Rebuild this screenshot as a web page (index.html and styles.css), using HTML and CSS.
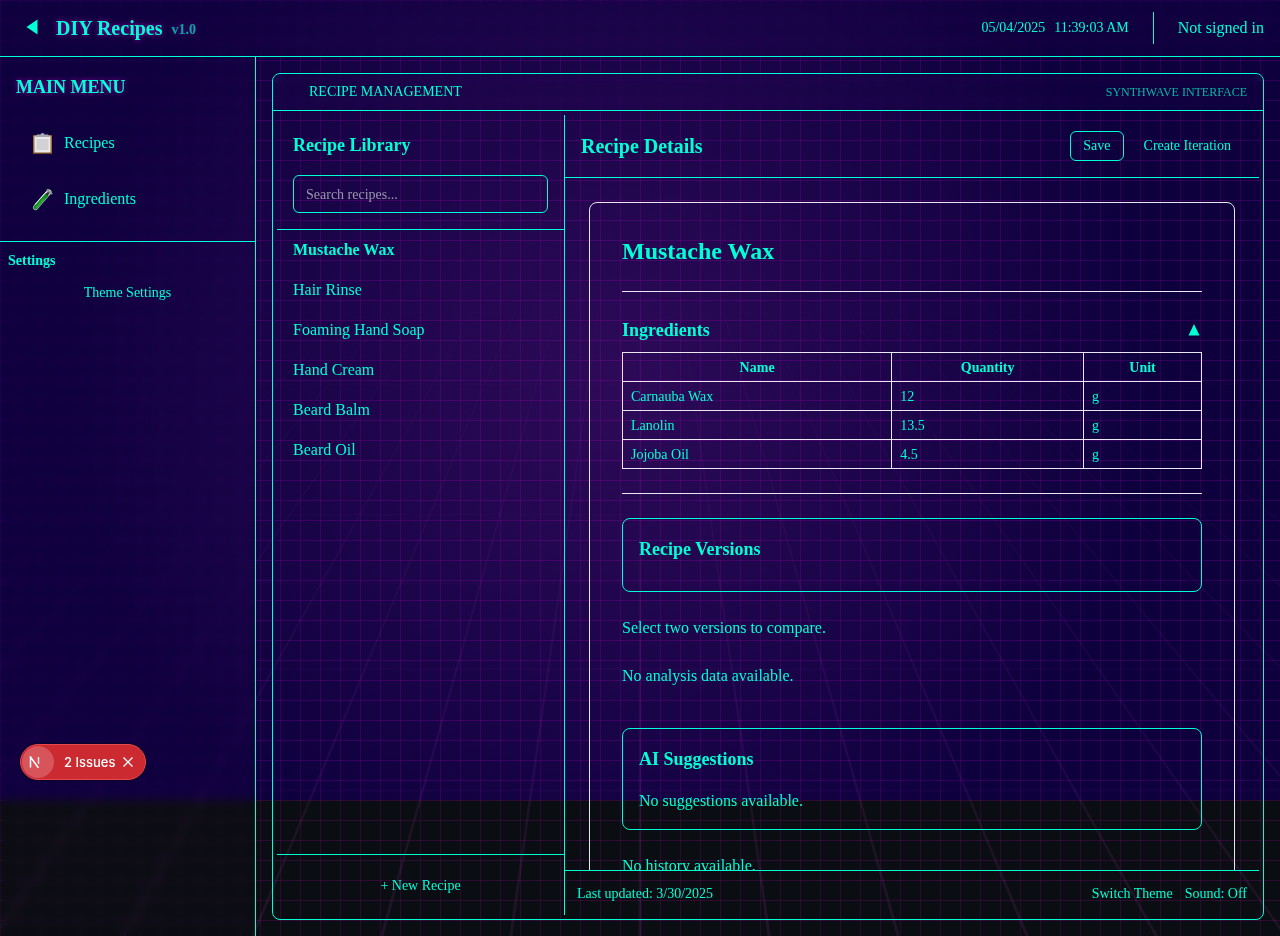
FILE: index.html
```html
<!DOCTYPE html>
<html lang="en">
<head>
<meta charset="utf-8">
<meta name="viewport" content="width=device-width, initial-scale=1">
<title>DIY Recipes</title>
<link rel="stylesheet" href="styles.css">
</head>
<body>
<div class="backdrop" aria-hidden="true">
  <div class="backdrop-glow"></div>
  <svg class="backdrop-floor" viewBox="0 0 1280 936" preserveAspectRatio="none">
    <defs>
      <linearGradient id="fade" gradientUnits="userSpaceOnUse" x1="0" y1="300" x2="0" y2="936">
        <stop offset="0" stop-color="#ff40ff" stop-opacity=".02"/>
        <stop offset="1" stop-color="#ff60ff" stop-opacity=".09"/>
      </linearGradient>
    </defs>
    <g id="floor-lines" fill="url(#fade)"></g>
    <g id="floor-rows" fill="#ff40ff" fill-opacity=".025"></g>
  </svg>
  <div class="backdrop-grid"></div>
</div>
<div class="app">
  <header class="topbar">
    <button class="back" aria-label="Collapse menu"><svg width="12" height="16" viewBox="0 0 12 16"><path d="M11.500 0.500V15.500L0.500 8Z" fill="currentColor"/></svg></button>
    <h1 class="brand">DIY Recipes</h1>
    <span class="version">v1.0</span>
    <div class="clock"><span>05/04/2025</span><span>11:39:03 AM</span></div>
    <div class="account">Not signed in</div>
  </header>
  <div class="body">
    <aside class="sidebar">
      <h2 class="menu-title">MAIN MENU</h2>
      <nav class="menu">
        <a class="menu-item" href="#recipes">
          <svg class="menu-icon" viewBox="0 0 22 24">
            <rect x="1" y="4" width="19" height="19" rx="1" fill="#9b6b38"/>
            <rect x="1.500" y="21.500" width="18" height="1.500" fill="#6d4520"/>
            <rect x="2.500" y="5" width="16" height="16.500" fill="#e9e9e9"/>
            <rect x="4.500" y="8" width="12" height="11" fill="#d2d2d4"/>
            <path d="M3 6L5 3.500H8.500Q8.500 2 10.500 2T12.500 3.500H16L18 6Z" fill="#a5a7b2"/>
          </svg>
          <span>Recipes</span></a>
        <a class="menu-item" href="#ingredients">
          <svg class="menu-icon" viewBox="0 0 22 24">
            <path d="M3.500 20.500L17 5" stroke="#b9cfc0" stroke-width="5" stroke-linecap="round"/>
            <path d="M3.500 20.500L14.500 8" stroke="#128a22" stroke-width="4" stroke-linecap="round"/>
            <path d="M4 20.800L12 11.500" stroke="#2fae3d" stroke-width="1.200"/>
            <path d="M14.500 8L17 5" stroke="#33333f" stroke-width="2"/>
            <path d="M15.500 3L19.500 6.500" stroke="#8e9699" stroke-width="2" stroke-linecap="round"/>
            <path d="M3 17.500L14.500 4.500" stroke="#eef4f0" stroke-width="1"/>
          </svg>
          <span>Ingredients</span></a>
      </nav>
      <section class="settings">
        <h3 class="settings-title">Settings</h3>
        <button class="btn">Theme Settings</button>
      </section>
    </aside>
    <main class="main">
      <div class="window">
        <div class="window-bar"><span class="window-title">RECIPE MANAGEMENT</span><span class="window-note">SYNTHWAVE INTERFACE</span></div>
        <div class="window-body">
          <section class="library">
            <div class="library-head">
              <h2 class="section-title">Recipe Library</h2>
              <input class="search" type="text" placeholder="Search recipes..." aria-label="Search recipes">
            </div>
            <ul class="recipes">
              <li><a class="recipe recipe-active" href="#1">Mustache Wax</a></li>
              <li><a class="recipe" href="#2">Hair Rinse</a></li>
              <li><a class="recipe" href="#3">Foaming Hand Soap</a></li>
              <li><a class="recipe" href="#4">Hand Cream</a></li>
              <li><a class="recipe" href="#5">Beard Balm</a></li>
              <li><a class="recipe" href="#6">Beard Oil</a></li>
            </ul>
            <div class="library-foot"><button class="btn">+ New Recipe</button></div>
          </section>
          <section class="details">
            <div class="details-head">
              <h2 class="details-title">Recipe Details</h2>
              <button class="btn btn-outline">Save</button>
              <button class="btn">Create Iteration</button>
            </div>
            <div class="details-body">
              <article class="card">
                <h2 class="recipe-name">Mustache Wax</h2>
                <section class="ingredients">
                  <div class="ingredients-head">
                    <h3 class="section-title">Ingredients</h3>
                    <button class="toggle" aria-label="Collapse ingredients"><svg width="12" height="12" viewBox="0 0 12 12"><path d="M6 0L11.500 11.500H0.500Z" fill="currentColor"/></svg></button>
                  </div>
                  <table class="table">
                    <thead><tr><th>Name</th><th>Quantity</th><th>Unit</th></tr></thead>
                    <tbody>
                      <tr><td>Carnauba Wax</td><td>12</td><td>g</td></tr>
                      <tr><td>Lanolin</td><td>13.5</td><td>g</td></tr>
                      <tr><td>Jojoba Oil</td><td>4.5</td><td>g</td></tr>
                    </tbody>
                  </table>
                </section>
                <section class="box"><h3 class="section-title">Recipe Versions</h3></section>
                <p>Select two versions to compare.</p>
                <p>No analysis data available.</p>
                <section class="box box-ai"><h3 class="section-title">AI Suggestions</h3><p class="box-text">No suggestions available.</p></section>
                <p>No history available.</p>
              </article>
            </div>
            <footer class="details-foot">
              <span class="updated">Last updated: 3/30/2025</span>
              <button class="link">Switch Theme</button>
              <button class="link">Sound: Off</button>
            </footer>
          </section>
        </div>
      </div>
    </main>
  </div>
</div>
<div class="issues">
  <span class="issues-logo"><svg width="12" height="12" viewBox="0 0 12 12" fill="none" stroke="#fff" stroke-width="1.500"><path d="M1.500 11.500V1L9.500 12"/><path d="M9.500 1V8" stroke-opacity=".8"/></svg></span>
  <button class="issues-open">2 Issues</button>
  <button class="issues-close" aria-label="Dismiss"><svg width="10" height="10" viewBox="0 0 10 10" stroke="#fff" stroke-width="1.300"><path d="M.5 .5L9.500 9.500M9.500 .5L.5 9.500"/></svg></button>
</div>
<script src="floor.js"></script>
</body>
</html>
```
FILE: floor.js
```js
// Perspective floor: rays from a vanishing point plus receding rows.
const horizon = 14, far = 312, near = 936, centre = 640;
const add = (id, points) => {
  const shape = document.createElementNS("http://www.w3.org/2000/svg", "polygon");
  shape.setAttribute("points", points);
  document.getElementById(id).appendChild(shape);
};
for (let i = -22; i <= 22; i++) {
  const half = 0.0016;
  const at = (y, extra) => centre + (y - horizon) * (0.14 * i + extra);
  add("floor-lines", `${at(far, -half)},${far} ${at(far, half)},${far} ${at(near, half)},${near} ${at(near, -half)},${near}`);
}
for (const y of [312, 332, 356, 384, 418, 460, 514, 582, 668, 789]) {
  const h = (y - horizon) * (y - horizon) / 180000;
  add("floor-rows", `0,${y} 1280,${y} 1280,${y + h} 0,${y + h}`);
}
```
FILE: styles.css
```css
* { box-sizing: border-box; }
:root { --neon: #00ffd5; --pale: #e8e6ee; }
html { background: #0a0d12; }
body {
  margin: 0;
  color: var(--neon);
  font: 16px/24px "Liberation Serif", "Times New Roman", serif;
}
h1, h2, h3, p, ul { margin: 0; padding: 0; }
ul { list-style: none; }
a { color: inherit; text-decoration: none; }
button { font: inherit; color: inherit; background: none; border: 0; padding: 0; margin: 0; cursor: pointer; }
svg { display: block; }

.backdrop, .backdrop-grid, .backdrop-floor { position: fixed; inset: 0; width: 100%; height: 100%; }
.backdrop { background: #0a0d12; }
.backdrop-glow {
  height: 800px;
  background: radial-gradient(circle at 48% 48%, #2d0a58 0%, #0d003d 70%);
}
.backdrop-grid {
  background-image:
    linear-gradient(rgba(255, 0, 255, .14) 1px, transparent 1px),
    linear-gradient(90deg, rgba(255, 0, 255, .12) 1px, transparent 1px);
  background-size: 20px 20px;
}

.app { position: relative; height: 100vh; display: flex; flex-direction: column; }
.topbar {
  height: 57px; flex: none; display: flex; align-items: center; padding: 0 16px;
  border-bottom: 1px solid var(--neon); backdrop-filter: blur(5px);
}
.back { width: 32px; height: 32px; display: grid; place-items: center; padding-bottom: 3px; }
.brand { margin-left: 8px; font-size: 20px; line-height: 28px; text-shadow: 0 0 5px rgba(255, 0, 255, .6); }
.version { margin-left: 9px; padding-top: 4px; font-size: 14px; line-height: 20px; font-weight: bold; opacity: .65; text-shadow: 0 0 5px rgba(255, 0, 255, .6); }
.clock { margin-left: auto; display: flex; gap: 9px; font-size: 14px; }
.account { margin-left: 24px; padding-left: 24px; border-left: 1px solid var(--neon); line-height: 32px; }

.body { flex: 1; min-height: 0; display: flex; }
.sidebar { width: 256px; flex: none; border-right: 1px solid var(--neon); backdrop-filter: blur(5px); }
.menu-title { padding: 16px; font-size: 18px; line-height: 28px; text-shadow: 0 0 5px rgba(255, 0, 255, .6); }
.menu { display: flex; flex-direction: column; gap: 16px; padding: 6px 16px 22px; }
.menu-item { display: flex; align-items: center; gap: 10px; padding: 8px 16px; }
.menu-icon { width: 22px; height: 24px; }
.settings { border-top: 1px solid var(--neon); padding: 9px 8px; display: flex; flex-direction: column; gap: 7px; }
.settings-title { font-size: 14px; line-height: 20px; }
.btn { padding: 5px 12px; font-size: 14px; line-height: 20px; }
.btn-outline { padding: 4px 12px; border: 1px solid var(--neon); border-radius: 6px; }

.main { flex: 1; min-width: 0; padding: 16px; }
.window { height: 100%; border: 1px solid var(--neon); border-radius: 8px; display: flex; flex-direction: column; overflow: hidden; }
.window-bar {
  height: 37px; flex: none; display: flex; justify-content: space-between; align-items: center;
  padding: 0 16px 0 36px; border-bottom: 1px solid var(--neon); backdrop-filter: blur(5px);
}
.window-title { font-size: 14px; }
.window-note { font-size: 12px; opacity: .7; }
.window-body { flex: 1; min-height: 0; padding: 4px; display: flex; }

.library { width: 288px; flex: none; display: flex; flex-direction: column; border-right: 1px solid var(--neon); }
.library-head { padding: 16px; border-bottom: 1px solid var(--neon); }
.section-title { font-size: 18px; line-height: 28px; }
.search {
  display: block; width: 100%; margin-top: 16px; padding: 9px 12px 7px;
  font: 14px/20px "Liberation Serif", "Times New Roman", serif; color: inherit;
  background: none; border: 1px solid var(--neon); border-radius: 6px;
}
.search::placeholder { color: #9c96ac; opacity: 1; }
.recipes { flex: 1; }
.recipe { display: block; padding: 8px 16px; }
.recipe-active { font-weight: bold; }
.library-foot { border-top: 1px solid var(--neon); padding: 16px 16px 14px; display: flex; flex-direction: column; }

.details { flex: 1; min-width: 0; display: flex; flex-direction: column; }
.details-head { display: flex; align-items: center; gap: 8px; padding: 16px; border-bottom: 1px solid var(--neon); }
.details-title { flex: 1; font-size: 20px; line-height: 28px; }
.details-body { flex: 1; min-height: 0; overflow: hidden; padding: 24px; }
.card { border: 1px solid var(--pale); border-radius: 8px; padding: 32px; display: flex; flex-direction: column; gap: 24px; }
.recipe-name { padding-bottom: 24px; border-bottom: 1px solid var(--pale); font-size: 24px; line-height: 32px; }
.ingredients { padding-bottom: 24px; border-bottom: 1px solid var(--pale); }
.ingredients-head { display: flex; justify-content: space-between; align-items: center; margin-bottom: 8px; }
.toggle { padding: 0 2px; }
.table { width: 100%; border-collapse: collapse; font-size: 14px; line-height: 20px; }
.table th, .table td { border: 1px solid var(--pale); padding: 5px 8px 3px; }
.box { border: 1px solid var(--neon); border-radius: 8px; padding: 16px 16px 28px; }
.box-ai { margin-top: 16px; padding-bottom: 16px; }
.box-text { margin-top: 16px; }
.details-foot { display: flex; gap: 12px; padding: 13px 12px 11px; border-top: 1px solid var(--neon); font-size: 14px; line-height: 20px; }
.updated { flex: 1; }

.issues {
  position: fixed; left: 20px; bottom: 156px; height: 36px; display: flex; align-items: center;
  padding: 1px 12px 1px 1px; border: 1px solid #e5484d; border-radius: 18px; background: #ca2a30;
  box-shadow: 0 0 1px 1px rgba(0, 0, 0, .4);
  color: #fff; font: 500 13px/20px Inter, "Liberation Sans", sans-serif;
}
.issues-logo { width: 32px; height: 32px; border-radius: 50%; background: #d7555a; display: flex; align-items: center; padding-left: 7px; }
.issues-open { margin: 0 8px 0 10px; }
```
